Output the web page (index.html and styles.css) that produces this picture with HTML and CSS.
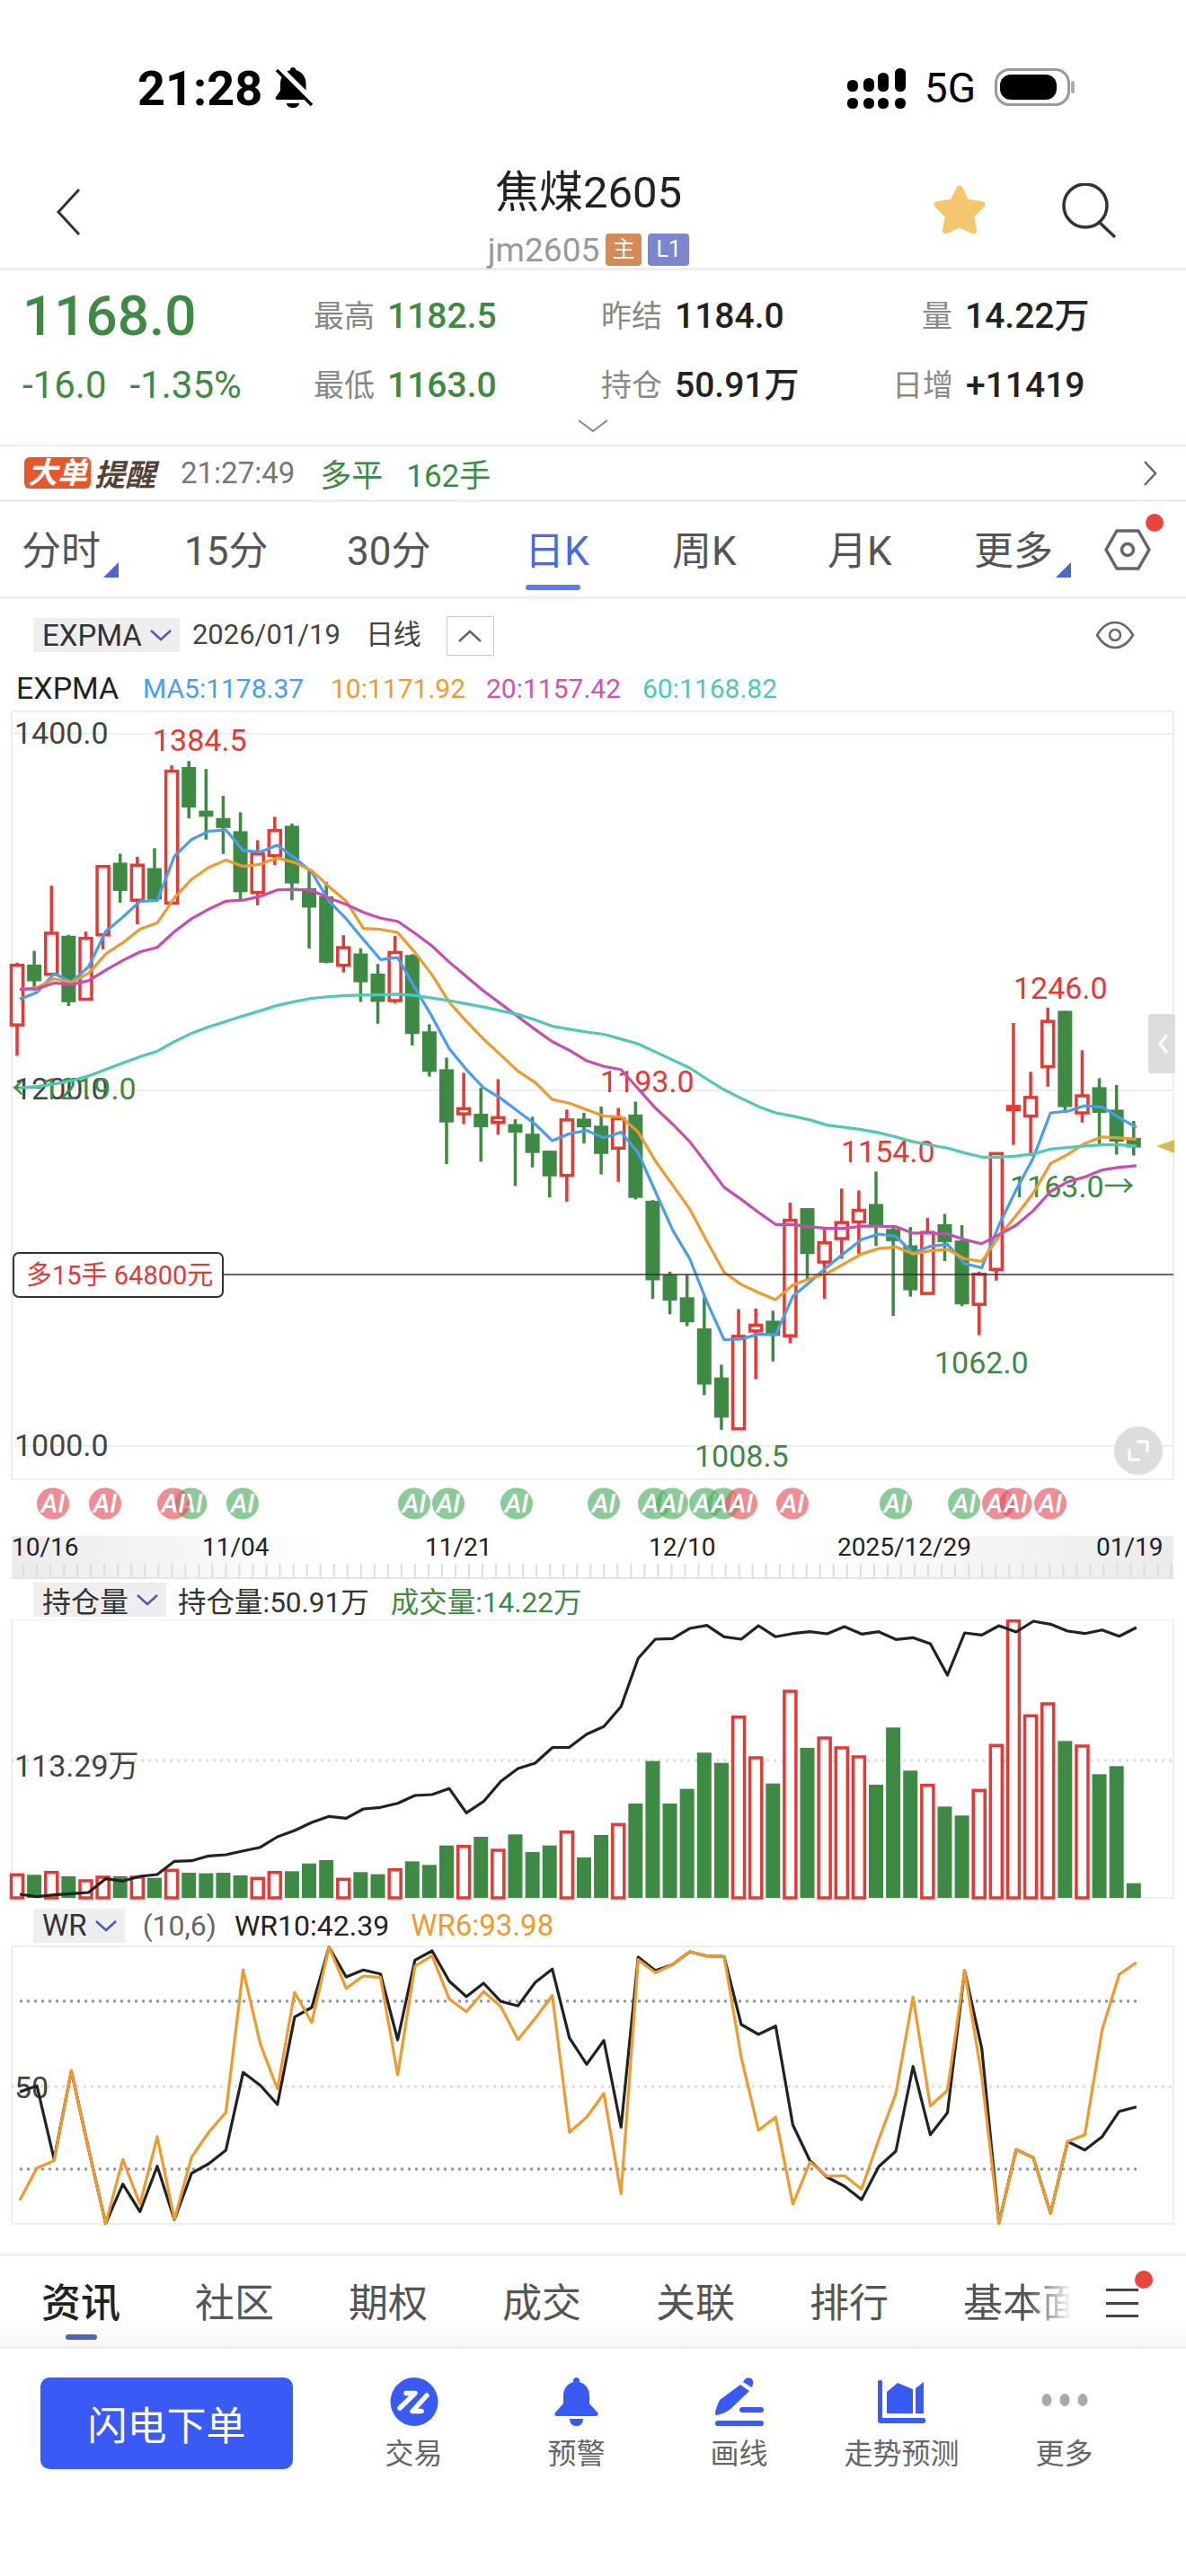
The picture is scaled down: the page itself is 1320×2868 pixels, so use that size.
FILE: index.html
```html
<!DOCTYPE html>
<html lang="zh-CN">
<head>
  <meta charset="UTF-8">
  <title>焦煤2605</title>
  <link rel="stylesheet" href="styles.css">
</head>
<body>

<div class="status-bar">
  <div class="status-left">
    <span class="clock">21:28</span>
    <svg class="bell-off" width="43" height="46" viewBox="0 0 43 46">
      <path d="M20 0c2 0 3 1 3.500 3 7 2 11 8 11 15v8l5 7c1 2 0 3-2 3H3c-2 0-3-1-2-3l5-7v-8c0-7 4-13 11-15 0-2 1-3 3-3z" fill="#000"/>
      <path d="M13 40h14c0 3-3 5-7 5s-7-2-7-5z" fill="#000"/>
      <line x1="5" y1="1" x2="44" y2="40" stroke="#fff" stroke-width="7"/>
      <line x1="2" y1="3" x2="41" y2="42" stroke="#000" stroke-width="3.500"/>
    </svg>
  </div>
  <div class="status-right">
    <svg width="65" height="45" viewBox="0 0 65 45" fill="#000">
      <rect x="0" y="13" width="12" height="13" rx="5.5"/>
      <rect x="18" y="11" width="12" height="15" rx="5.5"/>
      <rect x="34" y="5" width="12" height="21" rx="5.5"/>
      <rect x="53" y="0" width="12" height="26" rx="5.5"/>
      <rect x="0" y="33" width="12" height="12" rx="5.5"/>
      <rect x="18" y="33" width="12" height="12" rx="5.5"/>
      <rect x="34" y="33" width="12" height="12" rx="5.5"/>
      <rect x="53" y="33" width="12" height="12" rx="5.5"/>
    </svg>
    <span class="net">5G</span>
    <svg width="90" height="44" viewBox="0 0 90 44">
      <rect x="1.5" y="1.5" width="81" height="39" rx="15" fill="#fff" stroke="#999" stroke-width="3"/>
      <rect x="6" y="7" width="63" height="28" rx="12" fill="#000"/>
      <rect x="85" y="14" width="4" height="14" rx="2" fill="#aaa"/>
    </svg>
  </div>
</div>

<div class="nav">
  <div class="nav-left">
    <svg width="28" height="54" viewBox="0 0 28 54"><polyline points="26,2 3,27 26,52" fill="none" stroke="#333" stroke-width="3"/></svg>
  </div>
  <div class="nav-title">
    <div class="name">焦煤2605</div>
    <div class="code">jm2605<span class="tag tag-main">主</span><span class="tag tag-l1">L1</span></div>
  </div>
  <div class="nav-right">
    <svg width="62" height="62" viewBox="0 0 60 60">
      <polygon points="30,6 37,20.3 54,23 42,35 45,51 30,44 15,51 18,35 6,23 23,20.3" fill="#f5c56f" stroke="#f5c56f" stroke-width="7" stroke-linejoin="round"/>
    </svg>
    <svg width="62" height="62" viewBox="0 0 62 62" fill="none" stroke="#333" stroke-width="3.5">
      <circle cx="27" cy="25" r="24"/>
      <line x1="42" y1="43" x2="60" y2="60"/>
    </svg>
  </div>
</div>

<div class="quote">
  <div class="quote-grid">
    <div class="price">1168.0</div>
    <div class="stat"><span class="lbl">最高</span><span class="val green">1182.5</span></div>
    <div class="stat"><span class="lbl">昨结</span><span class="val">1184.0</span></div>
    <div class="stat indent"><span class="lbl">量</span><span class="val">14.22万</span></div>
    <div class="change"><span>-16.0</span><span>-1.35%</span></div>
    <div class="stat"><span class="lbl">最低</span><span class="val green">1163.0</span></div>
    <div class="stat"><span class="lbl">持仓</span><span class="val">50.91万</span></div>
    <div class="stat"><span class="lbl">日增</span><span class="val">+11419</span></div>
  </div>
  <svg class="expand" width="34" height="14" viewBox="0 0 34 14"><polyline points="1,1 17,13 33,1" fill="none" stroke="#888" stroke-width="2"/></svg>
</div>

<div class="alert">
  <span class="alert-big">大单</span><span class="alert-word">提醒</span>
  <span class="alert-time">21:27:49</span>
  <span class="alert-deal">多平</span>
  <span class="alert-deal">162手</span>
  <svg class="alert-more" width="16" height="30" viewBox="0 0 16 30"><polyline points="2,2 14,15 2,28" fill="none" stroke="#666" stroke-width="2.5"/></svg>
</div>

<div class="periods">
  <div class="period has-more">分时</div>
  <div class="period">15分</div>
  <div class="period">30分</div>
  <div class="period active">日K</div>
  <div class="period">周K</div>
  <div class="period">月K</div>
  <div class="period has-more">更多</div>
  <div class="period-gear">
    <svg width="52" height="46" viewBox="0 0 52 46" fill="none" stroke="#666" stroke-width="3.5">
      <polygon points="14,2 38,2 50,23 38,44 14,44 2,23" stroke-linejoin="round"/>
      <circle cx="26" cy="23" r="6.5"/>
    </svg>
    <span class="red-dot"></span>
  </div>
</div>

<div class="chart-toolbar">
  <div class="selector">EXPMA<svg width="26" height="14" viewBox="0 0 26 14"><polyline points="2,2 13,12 24,2"/></svg></div>
  <span class="date">2026/01/19</span>
  <span class="date">日线</span>
  <div class="collapse"><svg width="26" height="14" viewBox="0 0 26 14"><polyline points="1,13 13,2 25,13" fill="none" stroke="#666" stroke-width="2.5"/></svg></div>
  <svg class="eye" width="44" height="32" viewBox="0 0 44 32" fill="none" stroke="#666" stroke-width="2.5">
    <path d="M2 16C8 6 14 2 22 2s14 4 20 14c-6 10-12 14-20 14S8 26 2 16z"/>
    <circle cx="22" cy="16" r="6"/>
  </svg>
</div>

<div class="legend">
  <span class="legend-name">EXPMA</span>
  <span class="ma5">MA5:1178.37</span>
  <span class="ma10">10:1171.92</span>
  <span class="ma20">20:1157.42</span>
  <span class="ma60">60:1168.82</span>
</div>

<svg id="main-chart" class="panel" width="1320" height="970" viewBox="0 790 1320 970">
  <defs>
    <linearGradient id="slider-bg">
      <stop offset="0" stop-color="#ebebeb"/>
      <stop offset="0.27" stop-color="#fff"/>
      <stop offset="0.66" stop-color="#fff"/>
      <stop offset="1" stop-color="#ebebeb"/>
    </linearGradient>
  </defs>
</svg>

<div class="indicator-head vol-head">
  <div class="selector">持仓量<svg width="26" height="14" viewBox="0 0 26 14"><polyline points="2,2 13,12 24,2"/></svg></div>
  <span class="oi">持仓量:50.91万</span>
  <span class="volume">成交量:14.22万</span>
</div>

<svg id="vol-chart" class="panel" width="1320" height="316" viewBox="0 1804 1320 316"></svg>

<div class="indicator-head wr-head">
  <div class="selector">WR<svg width="26" height="14" viewBox="0 0 26 14"><polyline points="2,2 13,12 24,2"/></svg></div>
  <span class="wr-args">(10,6)</span>
  <span class="wr10">WR10:42.39</span>
  <span class="wr6">WR6:93.98</span>
</div>

<svg id="wr-chart" class="panel" width="1320" height="314" viewBox="0 2166 1320 314"></svg>

<div class="info-tabs">
  <div class="info-tab active">资讯</div>
  <div class="info-tab">社区</div>
  <div class="info-tab">期权</div>
  <div class="info-tab">成交</div>
  <div class="info-tab">关联</div>
  <div class="info-tab">排行</div>
  <div class="info-tab fade">基本面</div>
  <div class="info-menu">
    <span></span><span></span><span></span>
    <i class="red-dot"></i>
  </div>
</div>

<div class="action-bar">
  <button class="flash">闪电下单</button>
  <div class="actions">
    <div class="action">
      <svg width="54" height="54" viewBox="0 0 54 54">
        <ellipse cx="27" cy="27" rx="26.500" ry="27" fill="#3a5af5"/>
        <path d="M18 17.500h10L11 34M41 20 25 37.500h10" fill="none" stroke="#fff" stroke-width="5.500" stroke-linecap="round" stroke-linejoin="round"/>
      </svg>
      <span>交易</span>
    </div>
    <div class="action">
      <svg width="50" height="54" viewBox="0 0 50 54" fill="#3a5af5">
        <path d="M24.500 0c2 0 3.500 1.500 3.500 3.500V5c7 2 11 8 11 15v9l9 10c1.500 2 .5 4-2 4H3c-2.500 0-3.500-2-2-4l9-10v-9c0-7 4-13 11-15V3.500C21 1.500 22.500 0 24.500 0z"/>
        <path d="M17 46h15c0 5-3 8-7.500 8S17 51 17 46z"/>
      </svg>
      <span>预警</span>
    </div>
    <div class="action">
      <svg width="54" height="54" viewBox="0 0 54 54" fill="#3a5af5">
        <path d="M31 5l2-3c2-2 5-2 7-1 2 2 3 4 2 7l-1.500 3z"/>
        <path d="M28 8l10 7-22 21c-4 3-10 5-14 6-1.500 0-2-1-2-3 1-5 3-10 5-14z"/>
        <rect x="27" y="33" width="27" height="6" rx="3"/>
        <rect x="0" y="48" width="54" height="6" rx="3"/>
      </svg>
      <span>画线</span>
    </div>
    <div class="action">
      <svg width="54" height="54" viewBox="0 0 54 54" fill="#3a5af5">
        <path d="M0 5c0-3 5-3 5 0v40h46c3 0 3 6 0 6H3c-2 0-3-1-3-3z"/>
        <path d="M10 16 22 6l17 7v27H10z"/>
        <path d="M42 12l9-7v35h-9z"/>
      </svg>
      <span>走势预测</span>
    </div>
    <div class="action">
      <svg width="54" height="54" viewBox="0 0 54 54" fill="#aaa">
        <ellipse cx="7" cy="25" rx="5.5" ry="7"/>
        <ellipse cx="27" cy="25" rx="5.5" ry="7"/>
        <ellipse cx="47" cy="25" rx="5.5" ry="7"/>
      </svg>
      <span>更多</span>
    </div>
  </div>
</div>

<script src="chart.js"></script>
</body>
</html>
```

FILE: styles.css
```css
* {
  box-sizing: border-box;
}

body {
  margin: 0;
  width: 1320px;
  height: 2868px;
  overflow: hidden;
  background-color: #fff;
  font-family: Roboto, "Noto Sans CJK SC", sans-serif;
  color: #333;
}

svg {
  display: block;
  flex-shrink: 0;
}

.green {
  color: #3e8a44;
}

/* status bar */
.status-bar {
  height: 176px;
  padding: 20px 123px 0 153px;
  display: flex;
  justify-content: space-between;
  align-items: center;
}

.status-left,
.status-right {
  display: flex;
  align-items: center;
}

.status-left {
  gap: 14px;
}

.status-right {
  gap: 21px;
}

.clock {
  font-size: 54px;
  font-weight: 700;
  color: #000;
}

.net {
  font-size: 46px;
  color: #000;
}

/* nav */
.nav {
  height: 125px;
  border-bottom: 3px solid #eee;
  display: grid;
  grid-template-columns: 300px 1fr 300px;
}

.nav-left {
  padding: 33px 0 0 62px;
}

.nav-title {
  padding: 9px 10px 0 0;
  display: flex;
  flex-direction: column;
  align-items: center;
}

.name {
  font-size: 49px;
  line-height: 60px;
  color: #222;
}

.code {
  margin-top: 15px;
  display: flex;
  align-items: center;
  height: 36px;
  font-size: 37px;
  color: #999;
}

.tag {
  margin-left: 7px;
  width: 40px;
  height: 36px;
  border-radius: 4px;
  font-size: 25px;
  line-height: 36px;
  text-align: center;
  color: #fff;
}

.tag-main {
  background-color: #d58a5a;
}

.tag-l1 {
  width: 46px;
  background-color: #7d86cc;
}

.nav-right {
  display: flex;
  justify-content: flex-end;
  gap: 82px;
  padding: 28px 77px 0 0;
}

/* quote */
.quote {
  height: 196px;
  border-bottom: 2px solid #eee;
  padding: 21px 0 0 25px;
}

.quote-grid {
  display: grid;
  grid-template-columns: 324px 320px 324px 1fr;
  grid-auto-rows: 60px;
  row-gap: 17px;
}

.price {
  font-size: 62px;
  font-weight: 500;
  line-height: 60px;
  color: #3e8a44;
}

.change {
  display: flex;
  gap: 26px;
  font-size: 42px;
  line-height: 60px;
  color: #3e8a44;
}

.stat {
  display: flex;
  gap: 14px;
  line-height: 60px;
}

.stat.indent {
  margin-left: 33px;
}

.lbl {
  font-size: 34px;
  color: #888;
}

.val {
  font-size: 39px;
  font-weight: 500;
  color: #222;
}

.val.green {
  color: #3e8a44;
}

.expand {
  margin: 8px 0 0 618px;
}

/* big order alert */
.alert {
  height: 62px;
  border-bottom: 3px solid #eee;
  padding-left: 27px;
  display: flex;
  align-items: center;
}

.alert-big {
  width: 74px;
  height: 35px;
  border-radius: 6px;
  background-color: #e8562c;
  color: #fff;
  font-size: 33px;
  font-weight: 700;
  font-style: italic;
  line-height: 35px;
  text-align: center;
}

.alert-word {
  margin-left: 4px;
  font-size: 34px;
  font-weight: 700;
  font-style: italic;
  color: #54413a;
}

.alert-time {
  margin: 0 28px;
  font-size: 33px;
  color: #777;
}

.alert-deal {
  margin-right: 26px;
  font-size: 35px;
  color: #3e8a44;
}

.alert-more {
  margin-left: auto;
  margin-right: 32px;
}

/* period tabs */
.periods {
  height: 108px;
  border-bottom: 3px solid #eee;
  padding: 4px 0 0 24px;
  display: grid;
  grid-template-columns: 181px 181px 198px 164px 173px 163px 1fr;
  align-items: center;
  position: relative;
}

.period {
  justify-self: start;
  font-size: 44px;
  line-height: 60px;
  color: #555;
  position: relative;
}

.period.active {
  color: #4a6bd8;
}

.period.active::after {
  content: "";
  position: absolute;
  left: 1px;
  right: 10px;
  bottom: -13px;
  height: 6px;
  border-radius: 3px;
  background-color: #5a7de8;
}

.period.has-more::after {
  content: "";
  position: absolute;
  left: 100%;
  margin-left: 3px;
  bottom: 1px;
  border-style: solid;
  border-width: 0 0 17px 17px;
  border-color: transparent transparent #4a68d0 transparent;
}

.period-gear {
  position: absolute;
  left: 1229px;
  top: 30px;
}

.red-dot {
  position: absolute;
  width: 20px;
  height: 20px;
  border-radius: 50%;
  background-color: #e8453c;
}

.period-gear .red-dot {
  left: 46px;
  top: -17px;
}

/* chart header */
.chart-toolbar {
  height: 64px;
  padding: 21px 57px 0 37px;
  display: flex;
  align-items: flex-start;
  gap: 14px;
}

.selector {
  height: 38px;
  padding: 0 8px 0 10px;
  display: flex;
  align-items: center;
  gap: 8px;
  background-color: #eee;
  font-size: 33px;
  color: #333;
}

.selector polyline {
  fill: none;
  stroke: #4a5bb8;
  stroke-width: 2.5;
}

.date {
  font-size: 31px;
  line-height: 38px;
  color: #444;
}

.date + .date {
  margin-left: 14px;
}

.collapse {
  margin: -2px 0 0 14px;
  width: 53px;
  height: 44px;
  border: 1px solid #ccc;
  display: flex;
  align-items: center;
  justify-content: center;
}

.eye {
  margin-left: auto;
  margin-top: 3px;
}

.legend {
  height: 58px;
  padding: 12px 0 0 18px;
  display: flex;
  align-items: center;
  font-size: 30px;
}

.legend-name {
  width: 141px;
  font-size: 34px;
  color: #222;
}

.ma5 {
  width: 209px;
  color: #4a9ded;
}

.ma10 {
  width: 173px;
  color: #ee9a2f;
}

.ma20 {
  width: 174px;
  color: #d052b4;
}

.ma60 {
  color: #4fc8b4;
}

/* indicator heads */
.indicator-head {
  padding-left: 37px;
  display: flex;
  align-items: center;
  font-size: 32px;
}

.vol-head {
  height: 44px;
  gap: 13px;
}

.vol-head .selector {
  font-size: 32px;
}

.wr-head {
  height: 46px;
  padding-top: 3px;
  gap: 20px;
}

.oi {
  font-size: 31.500px;
  color: #333;
}

.volume {
  margin-left: 11px;
  font-size: 31.500px;
  color: #3e8a44;
}

.wr-args {
  color: #666;
}

.wr10 {
  color: #222;
}

.wr6 {
  margin-left: 4px;
  font-size: 33px;
  color: #ee9a2f;
}

/* chart svg parts */
.frame {
  fill: #fff;
  stroke: #eee;
  stroke-width: 2;
}

.grid {
  stroke: #eee;
  stroke-width: 2;
}

.grid-dot {
  stroke: #ddd;
  stroke-width: 3;
  stroke-dasharray: 3 5;
}

.grid-dot.strong {
  stroke: #8a93a8;
}

.wick-up {
  stroke: #e53935;
  stroke-width: 3.5;
}

.wick-down {
  stroke: #3e8a44;
  stroke-width: 3.5;
}

.body-up {
  fill: #fff;
  stroke: #e53935;
  stroke-width: 3.5;
}

.body-down {
  fill: #3e8a44;
}

.line {
  fill: none;
  stroke-width: 3.2;
  stroke-linejoin: round;
}

.line-ma5 { stroke: #4a9ded; }
.line-ma10 { stroke: #ee9a2f; }
.line-ma20 { stroke: #c84db0; }
.line-ma60 { stroke: #4fc8b4; }
.line-black { stroke: #222; }
.line-orange { stroke: #ee9a2f; }

.axis-text {
  font-size: 34px;
  fill: #444;
}

.high-text {
  font-size: 34px;
  fill: #e53935;
}

.low-text {
  font-size: 34px;
  fill: #3e8a44;
}

.date-text {
  font-size: 28px;
  fill: #222;
}

.pos-line {
  stroke: #333;
  stroke-width: 1.5;
}

.pos-box {
  fill: #fff;
  stroke: #333;
  stroke-width: 2;
}

.pos-text {
  font-size: 29px;
  fill: #e53935;
}

.ai-up {
  fill: #e8505a;
  opacity: 0.65;
}

.ai-down {
  fill: #4fae62;
  opacity: 0.65;
}

.ai-text {
  font-size: 29px;
  font-style: italic;
  font-weight: 500;
  fill: #fff;
  text-anchor: middle;
}

.slider-tick {
  stroke: #ddd;
  stroke-width: 2;
}

.slider-base {
  stroke: #e6e6e6;
  stroke-width: 2;
}

.side-tab {
  fill: #ddd;
}

.round-btn {
  fill: #ddd;
}

.btn-mark {
  fill: none;
  stroke: #fff;
  stroke-width: 3;
}

.cost-mark {
  fill: #d9b95a;
}

/* info tabs */
.info-tabs {
  margin-top: 30px;
  height: 106px;
  border-top: 3px solid #eee;
  border-bottom: 3px solid #eee;
  padding-left: 46px;
  display: flex;
  gap: 83px;
  align-items: flex-start;
  position: relative;
  background: linear-gradient(#fff 70%, #f7f7f7);
}

.info-tab {
  padding-top: 23px;
  font-size: 44px;
  line-height: 60px;
  color: #555;
  position: relative;
}

.info-tab.active {
  color: #222;
  font-weight: 500;
}

.info-tab.active::after {
  content: "";
  position: absolute;
  left: 27px;
  width: 35px;
  top: 87px;
  height: 6px;
  border-radius: 3px;
  background-color: #4f63b8;
}

.info-tab.fade {
  -webkit-mask-image: linear-gradient(to right, #000 55%, transparent 92%);
  mask-image: linear-gradient(to right, #000 55%, transparent 92%);
}

.info-menu {
  position: absolute;
  left: 1231px;
  top: 36px;
  width: 36px;
  height: 32px;
  display: flex;
  flex-direction: column;
  justify-content: space-between;
}

.info-menu span {
  height: 3px;
  background-color: #444;
}

.info-menu .red-dot {
  left: 32px;
  top: -20px;
}

/* bottom actions */
.action-bar {
  padding: 32px 0 0 45px;
  display: flex;
}

.flash {
  width: 281px;
  height: 102px;
  border: none;
  border-radius: 10px;
  background-color: #3a5af5;
  color: #fff;
  font-family: inherit;
  font-size: 44px;
  cursor: pointer;
}

.actions {
  margin-left: 44px;
  display: grid;
  grid-template-columns: repeat(5, 181px);
}

.action {
  display: flex;
  flex-direction: column;
  align-items: center;
  gap: 10px;
  font-size: 32px;
  line-height: 42px;
  color: #666;
}
```

FILE: chart.js
```js
// page-pixel helpers: every svg viewBox uses page coordinates
const NS = 'http://www.w3.org/2000/svg';
const candleX = i => 19 + 19.12 * i;
const lineX = i => 22 + 19.12 * i;

const unit = 560 / 1568;
const upper = v => 690 + v * unit;
const lower = v => 1240 + v * unit;
const third = base => v => base + v / 3;

function el(parent, tag, attrs, text) {
  const node = document.createElementNS(NS, tag);
  for (const k in attrs) node.setAttribute(k, attrs[k]);
  if (text) node.textContent = text;
  parent.appendChild(node);
  return node;
}

// [up?, high, top, bottom, low]
const candlesA = [
  [1,1072,1080,1266,1362],[0,1035,1078,1130,1160],[1,832,980,1108,1108],[0,985,988,1195,1207],
  [1,975,996,1186,1186],[1,772,772,985,1030],[0,732,760,848,885],[1,742,768,877,952],
  [0,715,777,875,877],[1,457,475,886,886],[0,443,462,588,622],[0,468,598,617,688],
  [0,552,621,652,733],[0,603,662,852,877],[1,690,733,853,893],[1,617,660,738,767],
  [0,638,645,825,877],[0,785,840,900,1028],[0,820,865,1072,1074],[1,986,1025,1080,1102],
  [0,1027,1043,1133,1194],[0,1076,1106,1194,1262],[1,988,1040,1190,1198],[0,1045,1048,1294,1330],
  [0,1264,1286,1412,1427],[0,1368,1404,1570,1700],[1,1415,1527,1543,1575],[0,1462,1543,1585,1692],
  [1,1435,1555,1570,1608],[0,1560,1575,1602,1768],[0,1552,1605,1665,1710],[0,1658,1658,1738,1804],
  [1,1530,1562,1735,1817],[0,1540,1558,1585,1635]
];
const candlesB = [
  [0,-20,40,128,192],[1,-15,18,110,215],[0,-35,5,265,270],[0,272,274,522,580],
  [0,495,505,585,628],[0,505,575,653,665],[0,575,672,847,880],[0,785,825,950,988],
  [1,612,697,985,988],[1,610,662,680,830],[0,617,648,695,775],[1,280,335,695,718],
  [0,297,297,440,520],[1,362,405,465,580],[1,236,342,392,455],[1,242,304,340,440],
  [0,183,284,350,415],[0,350,362,400,633],[0,356,413,553,573],[1,328,373,563,563],
  [0,315,347,403,462],[0,350,398,597,603],[1,495,503,597,693],[1,124,127,488,523],
  [1,-280,-20,-10,100],[1,-128,-48,10,135],[1,-328,-285,-144,-82],[0,-318,-318,-18,-5],
  [1,-195,-53,0,30],[0,-108,-80,0,100],[0,-87,-10,90,130],[0,25,78,108,133]
];

const ma = {
  ma5: [[1185,1165,1106,1132,1085,975,930,880,878,740,688,662,658,722,727,706,745,790,880,935,1000,1062,1056,1150,1240,1340,1405,1462,1495,1535,1575,1627,1605,1595],
        [78,60,125,245,365,455,590,707,705,690,692,572,527,480,437,395,378,385,437,416,410,470,483,350,240,140,0,-5,-22,-18,15,45]],
  ma10: [[1155,1150,1122,1133,1105,1045,1010,967,948,870,812,775,752,772,765,745,760,785,835,880,965,968,978,1040,1110,1195,1255,1310,1360,1410,1445,1498,1510,1530],
         [10,12,60,150,225,300,400,497,535,560,582,537,517,500,470,440,423,418,440,430,425,455,463,385,320,250,158,130,95,75,78,82]],
  ma20: [[1155,1153,1135,1140,1128,1095,1065,1038,1024,975,935,905,880,877,865,845,843,847,870,890,915,933,943,980,1020,1070,1115,1160,1200,1240,1280,1318,1345,1378],
         [-145,-135,-75,-15,35,90,160,232,270,310,348,348,355,360,360,353,353,355,375,375,378,395,408,380,350,305,245,215,200,178,170,165]],
  ma60: [[1462,1458,1450,1440,1425,1405,1385,1365,1348,1318,1292,1272,1255,1238,1222,1205,1193,1183,1178,1174,1173,1172,1170,1174,1182,1190,1200,1210,1222,1233,1250,1270,1279,1288],
         [-245,-230,-215,-190,-165,-140,-105,-72,-45,-20,0,10,22,38,45,52,62,75,90,100,110,125,138,138,135,128,113,108,103,100,100,103]]
};

// bars: [up?, top]
const bars = [
  [1,1045],[0,1045],[1,1037],[0,1050],[1,1065],[1,1053],[0,1050],[1,1053],[0,1055],[1,1030],[0,1038],
  [0,1040],[0,1038],[0,1047],[1,1057],[1,1037],[0,1033],[0,1007],[0,996],[1,1060],[0,1036],[0,1043],
  [1,1028],[0,1000],[0,1012],[0,947],[1,950],[0,918],[1,963],[0,910],[0,969],[0,947],[1,902],[0,987],
  [0,912],[1,877],[0,807],[0,665],[0,807],[0,758],[0,637],[0,671],[1,518],[1,654],[0,740],[1,432],
  [0,621],[1,588],[1,621],[1,651],[0,744],[0,553],[0,697],[1,746],[0,817],[0,847],[1,763],[1,613],
  [1,197],[1,514],[1,474],[0,598],[1,615],[0,709],[0,682],[0,1073]
];
const openInterest = [1110,1118,1112,1108,1104,1058,1066,1050,1044,1000,998,982,978,965,953,918,897,870,850,856,825,820,806,780,777,757,838,800,733,690,672,620,619,575,
  550,483,322,258,256,222,212,250,258,213,250,239,233,240,216,241,233,259,253,273,378,237,244,213,234,198,208,231,239,227,248,219];

const wr10 = [690,670,915,620,880,1130,998,1090,938,1117,962,930,885,625,668,732,440,408,207,306,283,296,516,250,219,320,372,327,388,403,325,280,510,598,
  518,808,240,285,265,222,236,238,465,498,470,800,920,975,1005,1050,940,888,605,833,760,285,545,1128,883,910,1095,856,884,840,755,740];
const wr6 = [1052,944,920,618,880,1130,916,1065,840,1115,908,825,758,282,530,680,358,458,207,344,303,308,633,270,235,380,422,355,405,515,445,368,825,775,
  695,1030,248,292,265,222,236,238,575,818,775,1065,925,972,970,1015,850,695,373,737,685,285,640,1130,883,910,1095,856,833,483,298,258];

function polyline(svg, ys, cls) {
  const pts = ys.map((y, i) => lineX(i).toFixed(1) + ',' + y.toFixed(1)).join(' ');
  el(svg, 'polyline', { points: pts, class: 'line ' + cls });
}

function frame(svg, top, bottom) {
  el(svg, 'rect', { x: 13, y: top, width: 1293, height: bottom - top, class: 'frame' });
}

function label(svg, x, y, cls, text) {
  el(svg, 'text', { x: x, y: y, class: cls, 'dominant-baseline': 'central' }, text);
}

function drawCandle(svg, c, i, scale) {
  const x = candleX(i);
  const high = scale(c[1]), top = scale(c[2]), bottom = scale(c[3]), low = scale(c[4]);
  if (c[0]) {
    el(svg, 'line', { x1: x, x2: x, y1: high, y2: low, class: 'wick-up' });
    el(svg, 'rect', { x: x - 6.5, y: top, width: 13, height: bottom - top, class: 'body-up' });
  } else {
    el(svg, 'line', { x1: x, x2: x, y1: high, y2: low, class: 'wick-down' });
    el(svg, 'rect', { x: x - 8, y: top, width: 16, height: bottom - top, class: 'body-down' });
  }
}

function drawMain() {
  const svg = document.getElementById('main-chart');
  frame(svg, 793, 1648);
  [818, 1215, 1611].forEach(y => el(svg, 'line', { x1: 13, x2: 1306, y1: y, y2: y, class: 'grid' }));

  candlesA.forEach((c, i) => drawCandle(svg, c, i, upper));
  candlesB.forEach((c, i) => drawCandle(svg, c, i + candlesA.length, lower));

  label(svg, 16, 817, 'axis-text', '1400.0');
  label(svg, 16, 1213, 'axis-text', '1200.0');
  label(svg, 16, 1610, 'axis-text', '1000.0');
  label(svg, 170, 825, 'high-text', '1384.5');
  label(svg, 668, 1205, 'high-text', '1193.0');
  label(svg, 1128, 1101, 'high-text', '1246.0');
  label(svg, 936, 1283, 'high-text', '1154.0');
  label(svg, 13, 1213, 'low-text', '←1219.0');
  label(svg, 1124, 1322, 'low-text', '1163.0→');
  label(svg, 1040, 1518, 'low-text', '1062.0');
  label(svg, 773, 1622, 'low-text', '1008.5');

  ['ma5', 'ma10', 'ma20', 'ma60'].forEach(name => {
    const ys = ma[name][0].map(upper).concat(ma[name][1].map(lower));
    polyline(svg, ys, 'line-' + name);
  });

  // position line and its label
  el(svg, 'line', { x1: 248, x2: 1306, y1: 1420, y2: 1420, class: 'pos-line' });
  el(svg, 'rect', { x: 15, y: 1396, width: 233, height: 49, rx: 6, class: 'pos-box' });
  label(svg, 29, 1421, 'pos-text', '多15手 64800元');

  // right edge marks
  el(svg, 'polygon', { points: '1287,1277 1307,1270 1307,1285', class: 'cost-mark' });
  el(svg, 'rect', { x: 1278, y: 1130, width: 30, height: 66, rx: 3, class: 'side-tab' });
  el(svg, 'polyline', { points: '1299,1153 1291,1163 1299,1173', class: 'btn-mark' });
  el(svg, 'circle', { cx: 1267, cy: 1616, r: 27, class: 'round-btn' });
  el(svg, 'path', { d: 'M1265 1606h12v12M1269 1626h-12v-12', class: 'btn-mark' });

  // AI markers
  const ai = [[59,1],[117,1],[212.5,0],[193,1],[270,0],[461,0],[499,0],[575,0],[672,0],[728,0],[748,0],[785,0],[805,0],[825,1],[882,1],[997,0],[1073,0],[1111,1],[1130.5,1],[1169,1]];
  ai.forEach(a => {
    el(svg, 'ellipse', { cx: a[0], cy: 1675, rx: 18, ry: 17.5, class: a[1] ? 'ai-up' : 'ai-down' });
    el(svg, 'text', { x: a[0], y: 1675, class: 'ai-text', 'dominant-baseline': 'central' }, 'AI');
  });

  // time axis slider
  el(svg, 'rect', { x: 13, y: 1711, width: 1293, height: 47, fill: 'url(#slider-bg)' });
  for (let x = 26; x < 1306; x += 15.03) {
    el(svg, 'line', { x1: x, x2: x, y1: 1742, y2: 1758, class: 'slider-tick' });
  }
  el(svg, 'line', { x1: 13, x2: 1306, y1: 1758, y2: 1758, class: 'slider-base' });
  [[13,'10/16'],[225,'11/04'],[473,'11/21'],[722,'12/10'],[932,'2025/12/29'],[1220,'01/19']].forEach(d => {
    label(svg, d[0], 1723, 'date-text', d[1]);
  });
}

function drawVolume() {
  const svg = document.getElementById('vol-chart');
  const y = third(1740);
  frame(svg, 1804, 2114);
  el(svg, 'line', { x1: 13, x2: 1306, y1: 1961, y2: 1961, class: 'grid-dot' });
  bars.forEach((b, i) => {
    const x = candleX(i), top = y(b[1]);
    if (b[0]) {
      el(svg, 'rect', { x: x - 6.5, y: top, width: 13, height: 2114 - top, class: 'body-up' });
    } else {
      el(svg, 'rect', { x: x - 8, y: top, width: 16, height: 2114 - top, class: 'body-down' });
    }
  });
  label(svg, 16, 1967, 'axis-text', '113.29万');
  polyline(svg, openInterest.map(y), 'line-black');
}

function drawWr() {
  const svg = document.getElementById('wr-chart');
  const y = third(2100);
  frame(svg, 2168, 2477);
  el(svg, 'line', { x1: 22, x2: 1266, y1: 2229, y2: 2229, class: 'grid-dot strong' });
  el(svg, 'line', { x1: 13, x2: 1306, y1: 2324, y2: 2324, class: 'grid-dot' });
  el(svg, 'line', { x1: 22, x2: 1266, y1: 2416, y2: 2416, class: 'grid-dot strong' });
  label(svg, 16, 2325, 'axis-text', '50');
  polyline(svg, wr10.map(y), 'line-black');
  polyline(svg, wr6.map(y), 'line-orange');
}

drawMain();
drawVolume();
drawWr();
```
